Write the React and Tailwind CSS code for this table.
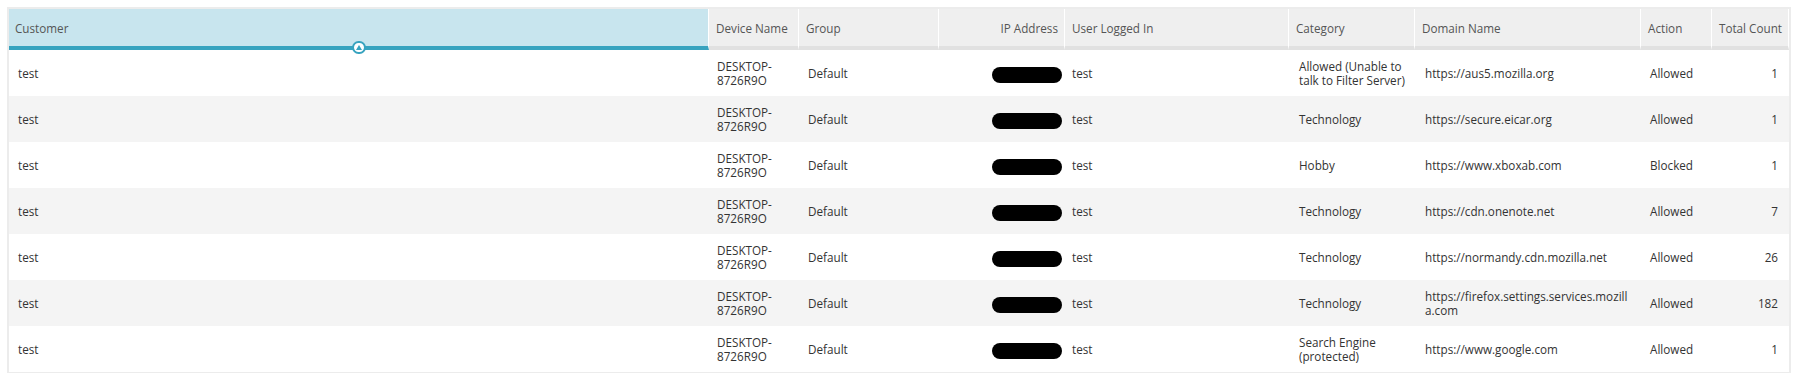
import React from 'react';

const cols = 'grid grid-cols-[700px_90px_140px_126px_224px_126px_226px_71px_77px]';

const rows = [
    { category: 'Allowed (Unable to talk to Filter Server)', domain: 'https://aus5.mozilla.org', action: 'Allowed', count: 1 },
    { category: 'Technology', domain: 'https://secure.eicar.org', action: 'Allowed', count: 1 },
    { category: 'Hobby', domain: 'https://www.xboxab.com', action: 'Blocked', count: 1 },
    { category: 'Technology', domain: 'https://cdn.onenote.net', action: 'Allowed', count: 7 },
    { category: 'Technology', domain: 'https://normandy.cdn.mozilla.net', action: 'Allowed', count: 26 },
    { category: 'Technology', domain: 'https://firefox.settings.services.mozilla.com', action: 'Allowed', count: 182 },
    { category: 'Search Engine (protected)', domain: 'https://www.google.com', action: 'Allowed', count: 1 },
];

function HeaderCell({ children, right }) {
    return (
        <div className={`h-[41px] bg-[#efefef] border-b-4 border-b-[#e1e1e1] border-r border-r-white flex items-center whitespace-nowrap ${right ? 'justify-end pl-[6px] pr-[6px]' : 'px-[7px]'}`}>
            {children}
        </div>
    );
}

export default function App() {
    return (
        <div className="bg-white w-[1798px] h-[373px] overflow-hidden pt-[7px] pl-[7px] font-['Open_Sans',sans-serif] text-[11.7px] leading-[14px]">
            <div className="w-[1784px] border-2 border-[#ececec]">
                <div className={`${cols} text-[#555]`}>
                    <div className="relative h-[41px] bg-[#c8e5ee] border-b-4 border-b-[#37a3bf] border-r border-r-white flex items-center px-[6px]">
                        Customer
                        <div className="absolute left-[343px] top-[32px] w-[14px] h-[13px] rounded-full bg-white border-2 border-[#37a3bf] flex items-center justify-center">
                            <div className="w-0 h-0 border-l-[3px] border-r-[3px] border-b-[5px] border-l-transparent border-r-transparent border-b-[#37a3bf] -mt-[1px]" />
                        </div>
                    </div>
                    <HeaderCell>Device Name</HeaderCell>
                    <HeaderCell>Group</HeaderCell>
                    <HeaderCell right>IP Address</HeaderCell>
                    <HeaderCell>User Logged In</HeaderCell>
                    <HeaderCell>Category</HeaderCell>
                    <HeaderCell>Domain Name</HeaderCell>
                    <HeaderCell>Action</HeaderCell>
                    <HeaderCell right>Total Count</HeaderCell>
                </div>
                {rows.map((r, i) => (
                    <div key={i} className={`${cols} h-[46px] text-[#333] ${i % 2 === 1 ? 'bg-[#f4f4f4]' : 'bg-white'}`}>
                        <div className="flex items-center pl-[9px]">test</div>
                        <div className="flex items-center pl-[8px] pr-[4px]">DESKTOP-8726R9O</div>
                        <div className="flex items-center pl-[9px]">Default</div>
                        <div className="flex items-center justify-end pr-[3px]">
                            <div className="mt-1 w-[70px] h-[16px] rounded-full bg-black" />
                        </div>
                        <div className="flex items-center pl-[7px]">test</div>
                        <div className="flex items-center pl-[10px] pr-[8px]">{r.category}</div>
                        <div className="flex items-center pl-[10px] pr-[12px] break-all">{r.domain}</div>
                        <div className="flex items-center pl-[9px]">{r.action}</div>
                        <div className="flex items-center justify-end pr-[11px]">{r.count}</div>
                    </div>
                ))}
            </div>
        </div>
    );
}
